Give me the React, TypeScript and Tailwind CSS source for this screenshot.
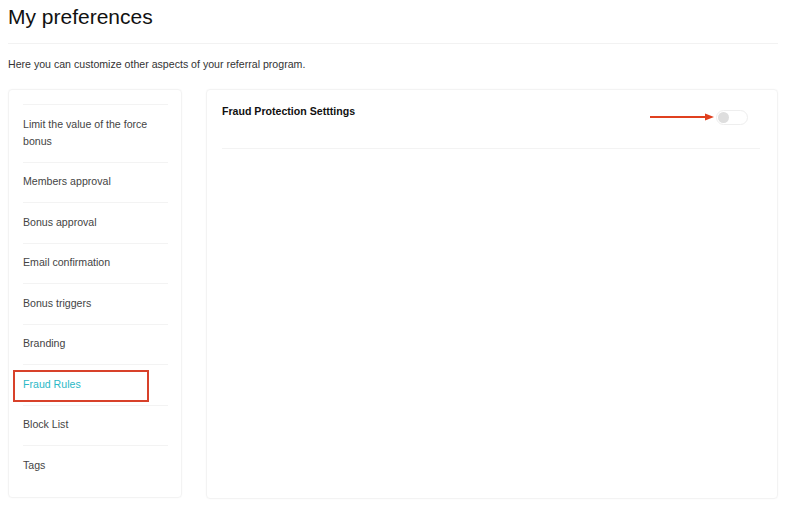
import React from "react";

const items = [
  "Limit the value of the force bonus",
  "Members approval",
  "Bonus approval",
  "Email confirmation",
  "Bonus triggers",
  "Branding",
  "Fraud Rules",
  "Block List",
  "Tags",
];

const App = () => {
  return (
    <div className="w-[786px] h-[505px] bg-white px-2 font-['Liberation_Sans',Arial,sans-serif] overflow-hidden">
      <h1 className="pt-[4px] text-[21px] leading-[26px] text-[#111]">My preferences</h1>
      <div className="mt-[13px] h-px bg-[#f2f2f2]" />
      <p className="mt-[13px] text-[10.6px] leading-[14px] text-[#333]">
        Here you can customize other aspects of your referral program.
      </p>

      <div className="mt-[18px] flex gap-6">
        {/* sidebar */}
        <div className="relative w-[174px] h-[409px] border border-[#f3f3f3] rounded-sm pt-[14px] pl-[14px] pr-[13px] shadow-[0_0_2px_rgba(0,0,0,0.03)]">
          {items.map((item) => (
            <div
              key={item}
              className={`border-t border-[#f3f3f3] pt-[10.5px] pb-[12px] text-[10.6px] leading-[17px] ${
                item === "Fraud Rules" ? "relative text-[#2bb8c6]" : "text-[#444]"
              }`}
            >
              {item}
              {item === "Fraud Rules" && (
                <div className="absolute left-[-10px] top-[5px] w-[136px] h-[32px] border-2 border-[#d8412a]" />
              )}
            </div>
          ))}
        </div>

        {/* content */}
        <div className="flex-1 h-[410px] border border-[#f3f3f3] rounded-sm pt-[12.5px] pl-[15px] pr-[17px] shadow-[0_0_2px_rgba(0,0,0,0.03)]">
          <div className="flex items-start justify-between pb-[22.5px] border-b border-[#f3f3f3]">
            <span className="text-[10.6px] leading-[17px] font-bold text-[#111]">
              Fraud Protection Setttings
            </span>
            <div className="relative mr-[12px] mt-[7.5px]">
              <svg
                className="absolute right-[33px] top-[2px]"
                width="65"
                height="10"
                viewBox="0 0 65 10"
              >
                <line x1="0" y1="5" x2="57" y2="5" stroke="#e0401f" strokeWidth="2" />
                <polygon points="55,1.5 64,5 55,8.5" fill="#e0401f" />
              </svg>
              <div className="w-[32px] h-[15px] rounded-full border border-[#eeeeee] bg-white p-[1px]">
                <div className="w-[11px] h-[11px] rounded-full bg-[#dedede]" />
              </div>
            </div>
          </div>
        </div>
      </div>
    </div>
  );
};

export default App;
